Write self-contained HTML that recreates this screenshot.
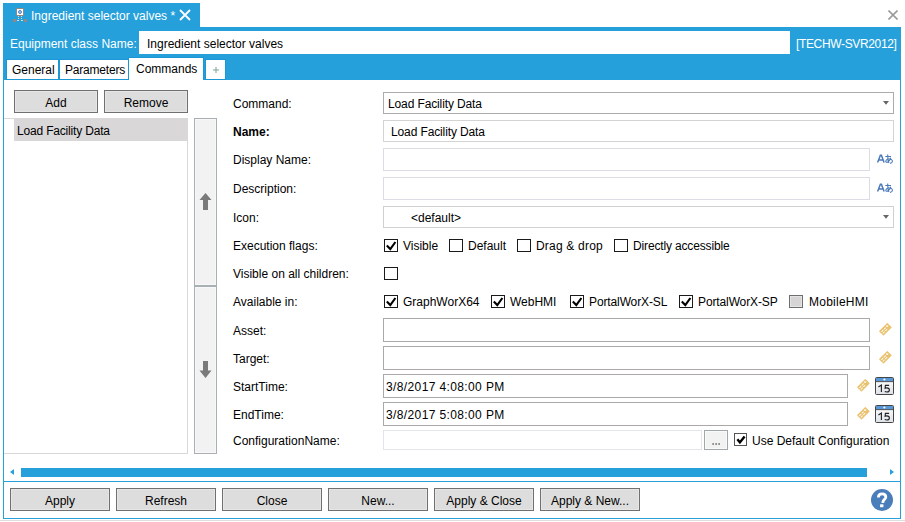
<!DOCTYPE html>
<html><head><meta charset="utf-8">
<style>
*{box-sizing:border-box;margin:0;padding:0}
html,body{width:905px;height:522px;overflow:hidden;background:#fff;position:relative}
body{font-family:"Liberation Sans",sans-serif;font-size:12px;color:#000}
.a{position:absolute}
.t{position:absolute;white-space:nowrap;line-height:14px;font-size:12px}
.btn{position:absolute;background:#dddddd;border:1px solid #707070;box-shadow:inset 0 0 0 1px #e6e6e6}
.btn span{position:absolute;left:0;right:0;text-align:center;top:5px;line-height:14px}
.box{position:absolute;background:#fff;border:1px solid #aba8a8}
.lt{border-color:#dcdce6}
.cb{position:absolute;width:14px;height:13px;border:1px solid #1a1a1a;background:#fff}
.ck{position:absolute;left:-1px;top:-1px}
.blue{background:#26a0da}
</style></head><body>

<!-- document tab -->
<div class="a blue" style="left:3px;top:3px;width:197px;height:24px"></div>
<svg class="a" style="left:12px;top:6px" width="18" height="18" viewBox="0 0 18 18">
  <rect x="4.5" y="2.5" width="7" height="7" fill="#fff" stroke="#8a8a8a" stroke-width="1"/>
  <circle cx="8" cy="6" r="1.5" fill="#a9c3e6" stroke="#4f86d0" stroke-width="1"/>
  <rect x="1" y="13" width="3" height="3" fill="#8a8a8a"/>
  <rect x="12" y="13" width="3" height="3" fill="#8a8a8a"/>
  <rect x="6" y="10" width="1" height="1" fill="#e2d6c6"/><rect x="9" y="10" width="1" height="1" fill="#e2d6c6"/>
  <rect x="6" y="12" width="1" height="1" fill="#e2d6c6"/><rect x="9" y="12" width="1" height="1" fill="#e2d6c6"/>
  <rect x="5" y="14" width="2" height="1" fill="#e2d6c6"/><rect x="9" y="14" width="2" height="1" fill="#e2d6c6"/>
</svg>
<div class="t" style="left:31px;top:9px;color:#fff">Ingredient selector valves *</div>
<svg class="a" style="left:179px;top:9px" width="12" height="12" viewBox="0 0 12 12"><path d="M1 1L11 11M11 1L1 11" stroke="#fff" stroke-width="1.8"/></svg>

<!-- window close -->
<svg class="a" style="left:888px;top:10px" width="10" height="10" viewBox="0 0 10 10"><path d="M0.5 0.5L9.5 9.5M9.5 0.5L0.5 9.5" stroke="#9a9a9a" stroke-width="1.6"/></svg>

<!-- blue band -->
<div class="a blue" style="left:3px;top:27px;width:898px;height:53px"></div>
<div class="t" style="left:10px;top:37px;color:#fff">Equipment class Name:</div>
<div class="a" style="left:139px;top:31px;width:651px;height:23px;background:#fff"></div>
<div class="t" style="left:147px;top:37px">Ingredient selector valves</div>
<div class="t" style="left:796px;top:37px;color:#fff;letter-spacing:-0.35px">[TECHW-SVR2012]</div>

<!-- tabs -->
<div class="a" style="left:6px;top:59px;width:53px;height:21px;background:#fff;border:1px solid #1b97d6"></div>
<div class="t" style="left:12px;top:63px">General</div>
<div class="a" style="left:59px;top:59px;width:70px;height:21px;background:#fff;border:1px solid #1b97d6"></div>
<div class="t" style="left:65px;top:63px;letter-spacing:-0.2px">Parameters</div>
<div class="a" style="left:128px;top:57px;width:76px;height:23px;background:#fff;border:1px solid #1b97d6;border-bottom:none"></div>
<div class="t" style="left:136px;top:62px">Commands</div>
<div class="a" style="left:205px;top:59px;width:21px;height:21px;background:#fff;border:1px solid #1b97d6"></div>
<svg class="a" style="left:213px;top:67px" width="6" height="6" viewBox="0 0 6 6"><path d="M3 0V6M0 3H6" stroke="#7aa596" stroke-width="1"/></svg>

<!-- content frame -->
<div class="a" style="left:3px;top:80px;width:898px;height:439px;border:1px solid #26a0da;border-top:none"></div>
<div class="a" style="left:0;top:520px;width:905px;height:1px;background:#dedede"></div>

<!-- left panel -->
<div class="btn" style="left:14px;top:90px;width:84px;height:23px"><span>Add</span></div>
<div class="btn" style="left:104px;top:90px;width:84px;height:23px"><span>Remove</span></div>
<div class="a" style="left:4px;top:118px;width:184px;height:336px;border-right:1px solid #d9d9d9;border-bottom:1px solid #d9d9d9;border-top:1px solid #d9d9d9"></div>
<div class="a" style="left:14px;top:118px;width:174px;height:23px;background:#d9d7d8"></div>
<div class="t" style="left:17px;top:124px;letter-spacing:-0.18px">Load Facility Data</div>

<div class="a" style="left:194px;top:118px;width:23px;height:168px;background:#f2f2f2;border:1px solid #a9b0b4;box-shadow:inset 0 0 0 1px #f8f8f8"></div>
<div class="a" style="left:194px;top:286px;width:23px;height:168px;background:#f2f2f2;border:1px solid #a9b0b4;box-shadow:inset 0 0 0 1px #f8f8f8"></div>
<svg class="a" style="left:194px;top:185px" width="23" height="30" viewBox="0 0 23 30"><path d="M11.5 8L17.5 15H14V25H9V15H5.5Z" fill="#7a7a7a"/></svg>
<svg class="a" style="left:194px;top:355px" width="23" height="30" viewBox="0 0 23 30"><path d="M9 6H14V15.5H17.5L11.5 23L5.5 15.5H9Z" fill="#7a7a7a"/></svg>

<!-- form labels -->
<div class="t" style="left:233px;top:97px">Command:</div>
<div class="t" style="left:233px;top:125px;font-weight:bold">Name:</div>
<div class="t" style="left:233px;top:153px">Display Name:</div>
<div class="t" style="left:233px;top:182px">Description:</div>
<div class="t" style="left:233px;top:211px">Icon:</div>
<div class="t" style="left:233px;top:239px">Execution flags:</div>
<div class="t" style="left:233px;top:267px">Visible on all children:</div>
<div class="t" style="left:233px;top:295px">Available in:</div>
<div class="t" style="left:233px;top:324px">Asset:</div>
<div class="t" style="left:233px;top:352px">Target:</div>
<div class="t" style="left:233px;top:380px">StartTime:</div>
<div class="t" style="left:233px;top:408px">EndTime:</div>
<div class="t" style="left:233px;top:434px">ConfigurationName:</div>

<!-- fields -->
<div class="box" style="left:383px;top:92px;width:511px;height:22px;border-color:#acacac"></div>
<div class="t" style="left:388px;top:97px;letter-spacing:-0.12px">Load Facility Data</div>
<svg class="a" style="left:883px;top:101px" width="6" height="4" viewBox="0 0 6 4"><path d="M0 0H6L3 3.8Z" fill="#666"/></svg>

<div class="box" style="left:383px;top:120px;width:511px;height:22px;border-color:#d4d4d4"></div>
<div class="t" style="left:391px;top:125px;letter-spacing:-0.12px">Load Facility Data</div>

<div class="box lt" style="left:383px;top:148px;width:487px;height:23px"></div>
<svg class="a" style="left:876px;top:154px" width="18" height="11" viewBox="0 0 18 11"><path d="M1.6 8.6L4.4 1.3H5.4L8.1 8.6M2.7 6.1H7" stroke="#4a7ab8" stroke-width="1.5" fill="none"/><path d="M9.3 2.5H15M11.7 0.4C11.6 3.5 11.7 6.3 12.9 9M14.8 3.7C13.8 6.6 11.5 8.8 10.3 8.2C9.2 7.6 9.9 5.2 12.7 5C15 4.9 16.6 6 16.4 7.5C16.3 8.6 15.3 9.2 14 9.4" stroke="#4a7ab8" stroke-width="1.1" fill="none"/></svg>
<div class="box lt" style="left:383px;top:177px;width:487px;height:23px"></div>
<svg class="a" style="left:876px;top:183px" width="18" height="11" viewBox="0 0 18 11"><path d="M1.6 8.6L4.4 1.3H5.4L8.1 8.6M2.7 6.1H7" stroke="#4a7ab8" stroke-width="1.5" fill="none"/><path d="M9.3 2.5H15M11.7 0.4C11.6 3.5 11.7 6.3 12.9 9M14.8 3.7C13.8 6.6 11.5 8.8 10.3 8.2C9.2 7.6 9.9 5.2 12.7 5C15 4.9 16.6 6 16.4 7.5C16.3 8.6 15.3 9.2 14 9.4" stroke="#4a7ab8" stroke-width="1.1" fill="none"/></svg>

<div class="box" style="left:383px;top:206px;width:511px;height:22px;border-color:#d0d0d0"></div>
<div class="t" style="left:411px;top:211px">&lt;default&gt;</div>
<svg class="a" style="left:883px;top:215px" width="6" height="4" viewBox="0 0 6 4"><path d="M0 0H6L3 3.8Z" fill="#666"/></svg>

<!-- execution flags -->
<div class="cb" style="left:384px;top:239px"><svg class="ck" width="14" height="13" viewBox="0 0 14 13"><path d="M2.8 6.6L6.3 10.1L11.4 3" stroke="#000" stroke-width="2.1" fill="none"/></svg></div>
<div class="t" style="left:403px;top:239px">Visible</div>
<div class="cb" style="left:449px;top:239px"></div>
<div class="t" style="left:468px;top:239px">Default</div>
<div class="cb" style="left:517px;top:239px"></div>
<div class="t" style="left:536px;top:239px;letter-spacing:0.2px">Drag &amp; drop</div>
<div class="cb" style="left:614px;top:239px"></div>
<div class="t" style="left:633px;top:239px;letter-spacing:-0.15px">Directly accessible</div>

<div class="cb" style="left:384px;top:267px"></div>

<!-- available in -->
<div class="cb" style="left:384px;top:295px"><svg class="ck" width="14" height="13" viewBox="0 0 14 13"><path d="M2.8 6.6L6.3 10.1L11.4 3" stroke="#000" stroke-width="2.1" fill="none"/></svg></div>
<div class="t" style="left:403px;top:295px">GraphWorX64</div>
<div class="cb" style="left:491px;top:295px"><svg class="ck" width="14" height="13" viewBox="0 0 14 13"><path d="M2.8 6.6L6.3 10.1L11.4 3" stroke="#000" stroke-width="2.1" fill="none"/></svg></div>
<div class="t" style="left:510px;top:295px">WebHMI</div>
<div class="cb" style="left:570px;top:295px"><svg class="ck" width="14" height="13" viewBox="0 0 14 13"><path d="M2.8 6.6L6.3 10.1L11.4 3" stroke="#000" stroke-width="2.1" fill="none"/></svg></div>
<div class="t" style="left:589px;top:295px;letter-spacing:-0.12px">PortalWorX-SL</div>
<div class="cb" style="left:679px;top:295px"><svg class="ck" width="14" height="13" viewBox="0 0 14 13"><path d="M2.8 6.6L6.3 10.1L11.4 3" stroke="#000" stroke-width="2.1" fill="none"/></svg></div>
<div class="t" style="left:698px;top:295px;letter-spacing:-0.12px">PortalWorX-SP</div>
<div class="cb" style="left:789px;top:295px;background:#d6d4d5;border-color:#6e6e6e;box-shadow:inset 0 0 0 1px #e4e4e4"></div>
<div class="t" style="left:809px;top:295px;letter-spacing:0.25px">MobileHMI</div>

<!-- asset/target/times -->
<div class="box" style="left:383px;top:318px;width:487px;height:24px"></div>
<div class="box" style="left:383px;top:346px;width:487px;height:24px"></div>
<div class="box" style="left:383px;top:374px;width:465px;height:24px"></div>
<div class="t" style="left:386px;top:380px;letter-spacing:0.38px">3/8/2017 4:08:00 PM</div>
<div class="box" style="left:383px;top:402px;width:465px;height:24px"></div>
<div class="t" style="left:386px;top:408px;letter-spacing:0.38px">3/8/2017 5:08:00 PM</div>
<div class="box" style="left:383px;top:430px;width:319px;height:20px;border-color:#e4e4ec"></div>
<div class="a" style="left:704px;top:430px;width:24px;height:20px;background:#f2f2f2;border:1px solid #a0a8ab;box-shadow:inset 0 0 0 1px #fafafa"></div>
<svg class="a" style="left:712px;top:443px" width="9" height="2" viewBox="0 0 9 2"><rect x="0.5" y="0" width="1.2" height="2" fill="#666"/><rect x="3.5" y="0" width="1.2" height="2" fill="#666"/><rect x="6.5" y="0" width="1.2" height="2" fill="#666"/></svg>
<div class="cb" style="left:734px;top:433px;width:13px;border-color:#555"><svg class="ck" width="13" height="13" viewBox="0 0 13 13"><path d="M3.4 6.2L5.9 9.4L10.6 3.4" stroke="#000" stroke-width="2.4" fill="none"/></svg></div>
<div class="t" style="left:752px;top:434px">Use Default Configuration</div>

<!-- tag icons -->
<svg class="a" style="left:879px;top:323px" width="14" height="14" viewBox="0 0 14 14"><g transform="rotate(-45 6.4 6.3)"><rect x="0.5" y="3.1" width="11.8" height="6.4" rx="0.6" fill="#eac26e"/><path d="M1.6 5.3H7.8M1.6 7.4H7.8" stroke="#fff" stroke-width="0.95" stroke-dasharray="2.6 0.9"/><path d="M9.9 4.2V6.4M8.8 5.3H11" stroke="#fff" stroke-width="0.9"/></g></svg>
<svg class="a" style="left:879px;top:351px" width="14" height="14" viewBox="0 0 14 14"><g transform="rotate(-45 6.4 6.3)"><rect x="0.5" y="3.1" width="11.8" height="6.4" rx="0.6" fill="#eac26e"/><path d="M1.6 5.3H7.8M1.6 7.4H7.8" stroke="#fff" stroke-width="0.95" stroke-dasharray="2.6 0.9"/><path d="M9.9 4.2V6.4M8.8 5.3H11" stroke="#fff" stroke-width="0.9"/></g></svg>
<svg class="a" style="left:857px;top:379px" width="14" height="14" viewBox="0 0 14 14"><g transform="rotate(-45 6.4 6.3)"><rect x="0.5" y="3.1" width="11.8" height="6.4" rx="0.6" fill="#eac26e"/><path d="M1.6 5.3H7.8M1.6 7.4H7.8" stroke="#fff" stroke-width="0.95" stroke-dasharray="2.6 0.9"/><path d="M9.9 4.2V6.4M8.8 5.3H11" stroke="#fff" stroke-width="0.9"/></g></svg>
<svg class="a" style="left:857px;top:407px" width="14" height="14" viewBox="0 0 14 14"><g transform="rotate(-45 6.4 6.3)"><rect x="0.5" y="3.1" width="11.8" height="6.4" rx="0.6" fill="#eac26e"/><path d="M1.6 5.3H7.8M1.6 7.4H7.8" stroke="#fff" stroke-width="0.95" stroke-dasharray="2.6 0.9"/><path d="M9.9 4.2V6.4M8.8 5.3H11" stroke="#fff" stroke-width="0.9"/></g></svg>

<!-- calendar icons -->
<svg class="a" style="left:875px;top:377px" width="19" height="18" viewBox="0 0 19 18"><defs><linearGradient id="cg377" x1="0" y1="0" x2="0" y2="1"><stop offset="0" stop-color="#ffffff"/><stop offset="1" stop-color="#dde2e8"/></linearGradient></defs><rect x="0.5" y="0.5" width="18" height="17" rx="1" fill="url(#cg377)" stroke="#454545"/><rect x="1" y="1" width="17" height="3.2" fill="#5898d8"/><rect x="1" y="4.2" width="17" height="0.9" fill="#3e3e3e"/><circle cx="9.4" cy="2.5" r="1.1" fill="#fff"/><path d="M3.4 10.1L6.4 8.1V14.9" stroke="#222" stroke-width="1.15" fill="none"/><path d="M14.1 8.4H10.4L10.1 11.3C10.6 11 11.2 10.9 11.8 10.9C13.3 10.9 14.4 11.8 14.4 13C14.4 14.2 13.3 15 11.8 15C11 15 10.3 14.8 9.8 14.4" stroke="#222" stroke-width="1.1" fill="none"/></svg>
<svg class="a" style="left:875px;top:405px" width="19" height="18" viewBox="0 0 19 18"><defs><linearGradient id="cg405" x1="0" y1="0" x2="0" y2="1"><stop offset="0" stop-color="#ffffff"/><stop offset="1" stop-color="#dde2e8"/></linearGradient></defs><rect x="0.5" y="0.5" width="18" height="17" rx="1" fill="url(#cg405)" stroke="#454545"/><rect x="1" y="1" width="17" height="3.2" fill="#5898d8"/><rect x="1" y="4.2" width="17" height="0.9" fill="#3e3e3e"/><circle cx="9.4" cy="2.5" r="1.1" fill="#fff"/><path d="M3.4 10.1L6.4 8.1V14.9" stroke="#222" stroke-width="1.15" fill="none"/><path d="M14.1 8.4H10.4L10.1 11.3C10.6 11 11.2 10.9 11.8 10.9C13.3 10.9 14.4 11.8 14.4 13C14.4 14.2 13.3 15 11.8 15C11 15 10.3 14.8 9.8 14.4" stroke="#222" stroke-width="1.1" fill="none"/></svg>

<!-- horizontal scrollbar -->
<svg class="a" style="left:10px;top:469px" width="4" height="6" viewBox="0 0 4 6"><path d="M4 0V6L0 3Z" fill="#26a0da"/></svg>
<div class="a blue" style="left:21px;top:468px;width:846px;height:9px"></div>
<svg class="a" style="left:890px;top:469px" width="4" height="6" viewBox="0 0 4 6"><path d="M0 0V6L4 3Z" fill="#26a0da"/></svg>
<div class="a blue" style="left:3px;top:481px;width:898px;height:1px"></div>

<!-- bottom buttons -->
<div class="btn" style="left:10px;top:488px;width:100px;height:23px"><span>Apply</span></div>
<div class="btn" style="left:116px;top:488px;width:100px;height:23px"><span>Refresh</span></div>
<div class="btn" style="left:222px;top:488px;width:100px;height:23px"><span>Close</span></div>
<div class="btn" style="left:328px;top:488px;width:100px;height:23px"><span>New...</span></div>
<div class="btn" style="left:434px;top:488px;width:100px;height:23px"><span>Apply &amp; Close</span></div>
<div class="btn" style="left:540px;top:488px;width:100px;height:23px"><span>Apply &amp; New...</span></div>

<!-- help -->
<svg class="a" style="left:871px;top:489px" width="22" height="22" viewBox="0 0 22 22"><circle cx="11" cy="11" r="11" fill="#4a7ebb"/><path d="M7.4 8.6C7.4 6.3 9 4.9 11.1 4.9C13.3 4.9 14.8 6.2 14.8 8.1C14.8 10.4 11.9 10.8 11.9 13.2V14" stroke="#fff" stroke-width="2.8" fill="none"/><rect x="9.1" y="15.3" width="3.3" height="2.9" fill="#fff"/></svg>

</body></html>
